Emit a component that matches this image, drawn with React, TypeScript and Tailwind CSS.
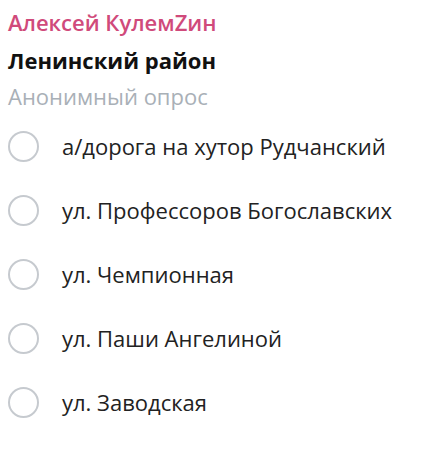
const options = [
  "а/дорога на хутор Рудчанский",
  "ул. Профессоров Богославских",
  "ул. Чемпионная",
  "ул. Паши Ангелиной",
  "ул. Заводская",
];

export default function App() {
  return (
    <div className="w-[441px] h-[449px] bg-white px-2 font-['Open_Sans',sans-serif]">
      {/* Header */}
      <div className="text-[22px] leading-[28px] pt-[8px] text-[#d04a7b] font-semibold">
        Алексей КулемZин
      </div>
      <div className="text-[22px] leading-[28px] mt-[10px] font-bold text-[#111]">
        Ленинский район
      </div>
      <div className="text-[22px] leading-[28px] mt-[8px] text-[#a9b0b7]">
        Анонимный опрос
      </div>

      {/* Options */}
      <div className="mt-[4px] flex flex-col">
        {options.map((opt) => (
          <div key={opt} className="h-[64px] flex items-center">
            <span className="w-[31px] h-[31px] rounded-full border-2 border-[#c6cacf] shrink-0" />
            <span className="ml-[23px] text-[22px] text-[#222]">{opt}</span>
          </div>
        ))}
      </div>
    </div>
  );
}
